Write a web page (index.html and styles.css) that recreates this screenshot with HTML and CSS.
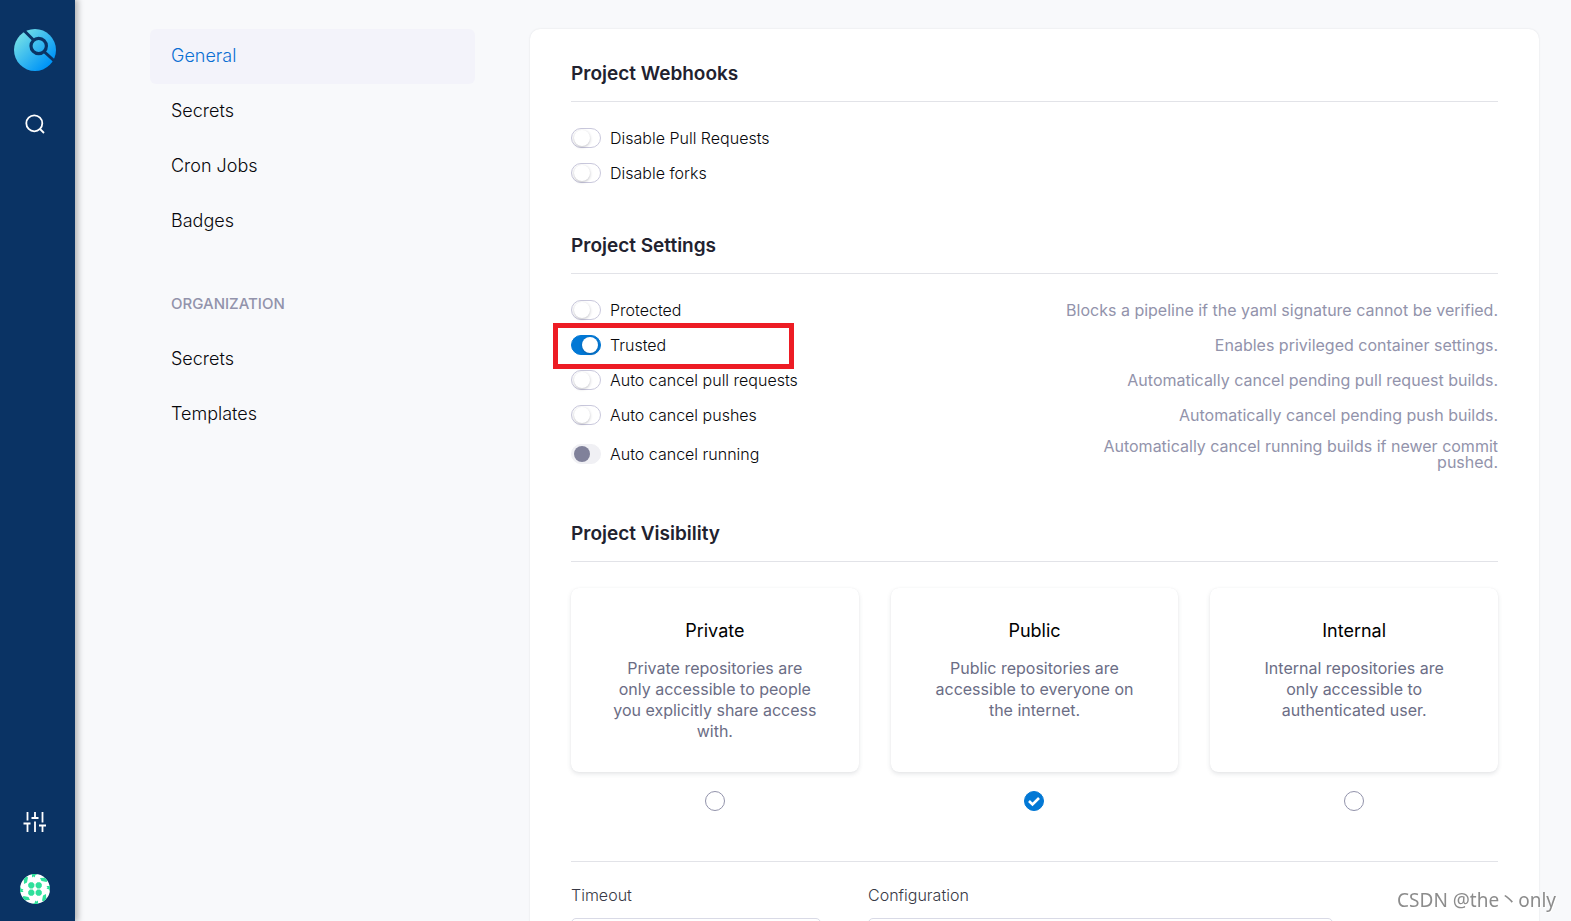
FILE: index.html
```html
<!DOCTYPE html>
<html lang="en">
<head>
<meta charset="utf-8">
<title>Project settings</title>
<link rel="stylesheet" href="styles.css">
</head>
<body>
<div class="app">
  <aside class="sidebar">
    <a class="logo" href="#" aria-label="Home">
      <svg width="42" height="42" viewBox="0 0 42 42">
        <defs><linearGradient id="brand" x1="0.1" y1="0.15" x2="0.8" y2="0.85"><stop offset="0" stop-color="#73dfe7"/><stop offset="1" stop-color="#0095f7"/></linearGradient></defs>
        <circle cx="21" cy="21" r="21" fill="url(#brand)"/>
        <g fill="none" stroke="#0a3364" stroke-width="3">
          <path d="M10 1.500L19.500 11M30 22.500L42 33.500"/>
          <circle cx="24.700" cy="17" r="7.700" stroke-width="3.200"/>
        </g>
      </svg>
    </a>
    <button class="icon-button" type="button" aria-label="Search">
      <svg class="icon" width="24" height="24" viewBox="0 0 24 24"><circle cx="11.300" cy="11.300" r="8"/><path d="M21 21L17 17"/></svg>
    </button>
    <a class="icon-button settings" href="#" aria-label="Settings">
      <svg class="icon" width="24" height="24" viewBox="0 0 24 24"><path d="M4.500 22v-8M4.500 10.500V2M12 22v-10.500M12 8V2M19.500 22v-6M19.500 12.500V2M0.500 13.500h7M8.500 8h7M16 15.500h7"/></svg>
    </a>
    <a class="avatar" href="#" aria-label="Account">
      <svg width="30" height="30" viewBox="0 0 30 30">
        <defs><clipPath id="round"><circle cx="15" cy="15" r="15"/></clipPath></defs>
        <g clip-path="url(#round)">
          <path fill="#fff" d="M0 0h30v30H0z"/>
          <g fill="#2fe09b">
            <path id="q" d="M10 8.200h2.600l1.800 1.800v2.600l-1.800 1.800h-2.600l-1.800-1.800v-2.600zM3.500 0L8 3.500 7 8.500 4 10zM12 0h5.500L12 3.500zM0 15l3.500 0-3.500 4z"/>
            <use href="#q" transform="rotate(90 15 15)"/>
            <use href="#q" transform="rotate(180 15 15)"/>
            <use href="#q" transform="rotate(270 15 15)"/>
          </g>
        </g>
      </svg>
    </a>
  </aside>

  <nav class="menu" aria-label="Settings">
    <a class="menu-item active" href="#">General</a>
    <a class="menu-item" href="#">Secrets</a>
    <a class="menu-item" href="#">Cron Jobs</a>
    <a class="menu-item" href="#">Badges</a>
    <h2 class="menu-title">ORGANIZATION</h2>
    <a class="menu-item" href="#">Secrets</a>
    <a class="menu-item" href="#">Templates</a>
  </nav>

  <main class="panel">
    <section class="section">
      <h2 class="heading">Project Webhooks</h2>
      <div class="rows">
        <div class="row"><label class="option"><input class="toggle" type="checkbox">Disable Pull Requests</label></div>
        <div class="row"><label class="option"><input class="toggle" type="checkbox">Disable forks</label></div>
      </div>
    </section>

    <section class="section">
      <h2 class="heading">Project Settings</h2>
      <div class="rows">
        <div class="row"><label class="option"><input class="toggle" type="checkbox">Protected</label><p class="hint">Blocks a pipeline if the yaml signature cannot be verified.</p></div>
        <div class="row marked"><label class="option"><input class="toggle" type="checkbox" checked>Trusted</label><p class="hint">Enables privileged container settings.</p></div>
        <div class="row"><label class="option"><input class="toggle" type="checkbox">Auto cancel pull requests</label><p class="hint">Automatically cancel pending pull request builds.</p></div>
        <div class="row"><label class="option"><input class="toggle" type="checkbox">Auto cancel pushes</label><p class="hint">Automatically cancel pending push builds.</p></div>
        <div class="row tall"><label class="option"><input class="toggle" type="checkbox" disabled>Auto cancel running</label><p class="hint">Automatically cancel running builds if newer commit pushed.</p></div>
      </div>
    </section>

    <section class="section">
      <h2 class="heading">Project Visibility</h2>
      <div class="choices">
        <label class="choice">
          <span class="card"><span class="card-title">Private</span><span class="card-text">Private repositories are only accessible to people you explicitly share access with.</span></span>
          <input class="radio" type="radio" name="visibility">
        </label>
        <label class="choice">
          <span class="card"><span class="card-title">Public</span><span class="card-text">Public repositories are accessible to everyone on the internet.</span></span>
          <span class="radio-wrap"><input class="radio" type="radio" name="visibility" checked><svg class="tick" width="20" height="20" viewBox="0 0 20 20"><path d="M5 10l3.500 3.500 6.500-6.500"/></svg></span>
        </label>
        <label class="choice">
          <span class="card"><span class="card-title">Internal</span><span class="card-text">Internal repositories are only accessible to authenticated user.</span></span>
          <input class="radio" type="radio" name="visibility">
        </label>
      </div>
    </section>

    <section class="fields">
      <div class="field"><label for="timeout">Timeout</label><input class="text-box" id="timeout" type="text"></div>
      <div class="field"><label for="config">Configuration</label><input class="text-box" id="config" type="text"></div>
    </section>
  </main>
</div>
<div class="watermark">CSDN @the丶only</div>
</body>
</html>
```
FILE: styles.css
```css
*,
*::before,
*::after {
  box-sizing: border-box;
}

body {
  margin: 0;
  background: #f8f9fb;
  color: #08080c;
  font: 300 16px/20px Inter, "Open Sans", sans-serif;
}

h2,
p {
  margin: 0;
}

a {
  color: inherit;
  text-decoration: none;
}

svg {
  display: block;
}

.app {
  display: grid;
  grid-template-columns: 75px 325px minmax(0, 1fr);
  height: 100vh;
  overflow: hidden;
}

/* Sidebar */
.sidebar {
  display: flex;
  flex-direction: column;
  align-items: center;
  height: 100vh;
  padding: 29px 5px 17px 0;
  background: #0a3364;
  box-shadow: 2px 0 6px 1px rgba(0, 0, 0, 0.28);
}

.icon-button {
  margin-top: 41px;
  padding: 0;
  border: 0;
  background: none;
}

.settings {
  margin-top: auto;
  margin-bottom: 40px;
}

.icon {
  fill: none;
  stroke: #fff;
  stroke-width: 1.8;
}

/* Settings menu */
.menu {
  margin: 29px 0 0 75px;
  width: 325px;
}

.menu-item {
  display: block;
  padding: 17px 21px 18px;
  border-radius: 6px;
  font-size: 18px;
}

.menu-item.active {
  background: #f3f3fa;
  color: #0b6fd3;
}

.menu-title {
  padding: 45px 21px 18px;
  color: #9293ab;
  font-size: 15px;
  font-weight: 500;
  line-height: 20px;
}

/* Content panel */
.panel {
  height: max-content;
  margin: 29px 32px 0 130px;
  padding: 33px 41px 40px;
  border-radius: 10px;
  background: #fff;
  box-shadow: 0 0 2px rgba(40, 41, 61, 0.12);
}

.section {
  margin-bottom: 43px;
}

.heading {
  padding-bottom: 15px;
  border-bottom: 1px solid #e2e3e8;
  color: #22222f;
  font-size: 19px;
  font-weight: 600;
  line-height: 24px;
}

.rows {
  padding: 18px 0 1px;
}

.row {
  position: relative;
  display: flex;
  align-items: center;
  justify-content: space-between;
  min-height: 35px;
}

.row.tall {
  padding: 6px 0 8px;
}

.marked::after {
  position: absolute;
  top: -4px;
  left: -18px;
  width: 241px;
  height: 46px;
  border: 5px solid #ed1c24;
  content: "";
  pointer-events: none;
}

.option {
  display: flex;
  align-items: center;
  gap: 9px;
}

.hint {
  max-width: 440px;
  color: #9293ab;
  font-weight: 400;
  line-height: 16px;
  text-align: right;
}

.toggle {
  display: flex;
  align-items: center;
  width: 30px;
  height: 20px;
  margin: 0;
  padding: 0 2px;
  border: 1px solid #c9c8dc;
  border-radius: 10px;
  background: #fff;
  appearance: none;
}

.toggle::before {
  width: 16px;
  height: 16px;
  border-radius: 50%;
  background: #fff;
  box-shadow: 0 1px 3px rgba(40, 41, 61, 0.3);
  content: "";
}

.toggle:checked {
  justify-content: flex-end;
  border-color: #0278d5;
  background: #0278d5;
}

.toggle:disabled {
  border-color: #f0f0f4;
  background: #f0f0f4;
}

.toggle:disabled::before {
  background: #80819a;
  box-shadow: none;
}

/* Visibility cards */
.choices {
  display: grid;
  grid-template-columns: repeat(3, minmax(0, 1fr));
  gap: 32px;
  padding-top: 26px;
}

.choice {
  display: flex;
  flex-direction: column;
  align-items: center;
  gap: 19px;
}

.card {
  display: flex;
  flex: 1;
  flex-direction: column;
  gap: 16px;
  width: 100%;
  padding: 32px 40px 30px;
  border-radius: 8px;
  box-shadow: 0 2px 4px rgba(96, 97, 112, 0.16), 0 0 1px rgba(40, 41, 61, 0.08);
  text-align: center;
}

.card-title {
  color: #000;
  font-size: 18px;
  font-weight: 400;
  line-height: 22px;
}

.card-text {
  color: #6b6d85;
  font-weight: 400;
  line-height: 21px;
}

.radio {
  display: block;
  width: 20px;
  height: 20px;
  margin: 0;
  border: 1px solid #9293ab;
  border-radius: 50%;
  background: #fff;
  appearance: none;
}

.radio:checked {
  border-color: #0278d5;
  background: #0278d5;
}

.radio-wrap {
  position: relative;
}

.tick {
  position: absolute;
  inset: 0;
  fill: none;
  stroke: #fff;
  stroke-width: 2.6;
}

/* Fields */
.fields {
  display: grid;
  grid-template-columns: 250px 465px;
  gap: 47px;
  margin-top: 50px;
  padding-top: 23px;
  border-top: 1px solid #e2e3e8;
  color: #383946;
}

.field {
  display: flex;
  flex-direction: column;
  gap: 13px;
}

.text-box {
  height: 38px;
  padding: 0 12px;
  border: 1px solid #d9dae6;
  border-radius: 5px;
  background: #fff;
  font: inherit;
}

.watermark {
  position: fixed;
  right: 15px;
  bottom: 7px;
  color: #8c8c8c;
  font: 400 19px/28px "Noto Sans", "Noto Sans CJK SC", sans-serif;
  text-shadow: 1px 1px 0 #fff;
}
```
